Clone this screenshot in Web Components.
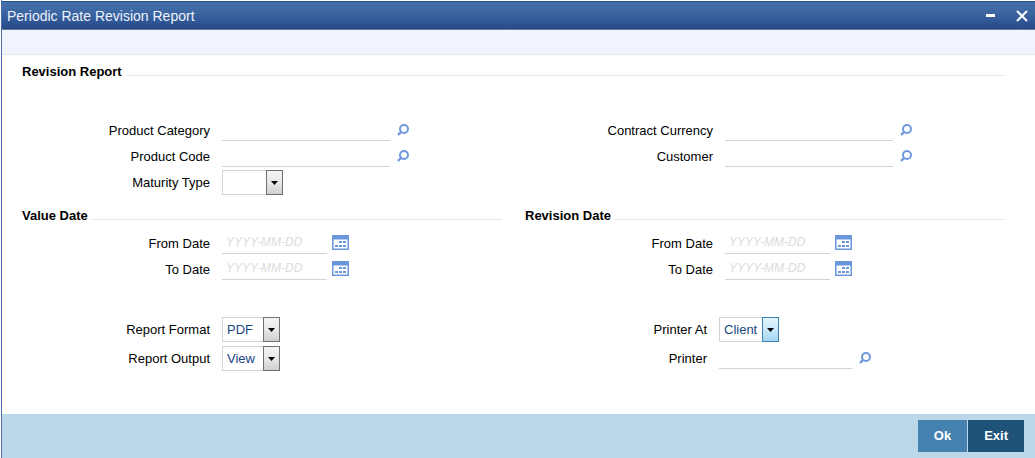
<!DOCTYPE html>
<html lang="en">
<head>
<meta charset="utf-8">
<title>Periodic Rate Revision Report</title>
<style>
  body { margin: 0; background: #fff; color: #000; font: 13px/16px "Liberation Sans", Arial, sans-serif; }
</style>
</head>
<body>
<report-window caption="Periodic Rate Revision Report">
  <form-section caption="Revision Report" class="lead">
    <form-columns>
      <form-rows>
        <lookup-field label="Product Category"></lookup-field>
        <lookup-field label="Product Code"></lookup-field>
        <select-field label="Maturity Type" options=" ,Fixed,Call,Notice" class="blank"></select-field>
      </form-rows>
      <form-rows>
        <lookup-field label="Contract Currency"></lookup-field>
        <lookup-field label="Customer"></lookup-field>
      </form-rows>
    </form-columns>
  </form-section>
  <form-columns>
    <form-section caption="Value Date">
      <form-rows>
        <date-field label="From Date"></date-field>
        <date-field label="To Date"></date-field>
      </form-rows>
    </form-section>
    <form-section caption="Revision Date">
      <form-rows>
        <date-field label="From Date"></date-field>
        <date-field label="To Date"></date-field>
      </form-rows>
    </form-section>
  </form-columns>
  <form-columns class="output">
    <form-rows>
      <select-field label="Report Format" options="PDF,RTF,HTML"></select-field>
      <select-field label="Report Output" options="View,Print,Spool"></select-field>
    </form-rows>
    <form-rows class="printer">
      <select-field label="Printer At" options="Client,Server" class="active"></select-field>
      <lookup-field label="Printer"></lookup-field>
    </form-rows>
  </form-columns>
  <action-button slot="actions">Ok</action-button>
  <action-button slot="actions" primary>Exit</action-button>
</report-window>

<script>
const base = `*, *::before, *::after { box-sizing: border-box; }
  button { border: 0; padding: 0; background: none; font: inherit; color: inherit; cursor: pointer; }`;

const fieldStyle = `${base}
  :host { display: flex; height: 26px; }
  label { flex: none; width: var(--label-width, 188px); margin-right: 12px; line-height: 27px; text-align: right; white-space: nowrap; }
  input { flex: none; height: 24px; border: 0; border-bottom: 1px solid #d3d3d3; border-radius: 0; padding: 0 4px; background: transparent; font: inherit; color: #1a4682; outline: 0; }
  button { display: flex; flex: none; }
  svg { display: block; }`;

class Base extends HTMLElement {
  constructor() { super(); this.attachShadow({ mode: "open" }); }
  connectedCallback() { this.shadowRoot.innerHTML = this.render(); }
  attr(name) { return this.getAttribute(name) || ""; }
}

customElements.define("report-window", class extends Base {
  render() { return `<style>${base}
    :host { display: flex; flex-direction: column; min-height: 100vh; box-sizing: border-box; margin-left: 1px; border-left: 1px solid #4a6fb0; padding-top: 1px; }
    header { display: flex; align-items: center; height: 29px; padding: 0 7px 0 5px; color: #eef3fb; background: linear-gradient(#436fa9, #3c66a2 40%, #26498a); border-top: 1px solid #234f90; border-bottom: 1px solid #6a7c96; }
    h1 { flex: 1; margin: 0; font-size: 14px; font-weight: normal; line-height: 16px; }
    header button { display: flex; }
    header button + button { margin-left: 20px; }
    .toolbar { height: 25px; background: #f0f4ff; border-bottom: 1px solid #e4e7ee; }
    main { flex: 1; padding: 9px 30px 43px 20px; }
    footer { display: flex; justify-content: flex-end; gap: 1px; height: 44px; padding: 6px 11px 6px 0; background: #bcd7ea; }
  </style>
  <header>
    <h1>${this.attr("caption")}</h1>
    <button type="button" aria-label="Minimize"><svg width="10" height="11"><path d="M0 5.5h9" stroke="#fff" stroke-width="3"/></svg></button>
    <button type="button" aria-label="Close"><svg width="12" height="12"><path d="M1 1l10 10M11 1L1 11" stroke="#fff" stroke-width="2"/></svg></button>
  </header>
  <div class="toolbar"></div>
  <main><slot></slot></main>
  <footer><slot name="actions"></slot></footer>`; }
});

customElements.define("form-section", class extends Base {
  render() { return `<style>${base}
    :host { display: block; --section-gap: 6px; }
    :host(.lead) { --section-gap: 37px; margin-bottom: 13px; }
    h2 { display: flex; align-items: flex-end; gap: 4px; margin: 0 0 var(--section-gap); font-size: 13px; line-height: 16px; white-space: nowrap; }
    h2::after { content: ""; flex: 1; height: 1px; margin-bottom: 4px; background: #e8e8e8; }
  </style><h2>${this.attr("caption")}</h2><slot></slot>`; }
});

customElements.define("form-columns", class extends Base {
  render() { return `<style>
    :host { display: grid; grid-template-columns: repeat(2, minmax(0, 1fr)); column-gap: 23px; }
    :host(.output) { margin-top: 34px; --row-gap: 3px; }
  </style><slot></slot>`; }
});

customElements.define("form-rows", class extends Base {
  render() { return `<style>
    :host { display: flex; flex-direction: column; gap: var(--row-gap, 0px); }
    :host(.printer) { --label-width: 182px; --input-width: 133px; }
  </style><slot></slot>`; }
});

customElements.define("lookup-field", class extends Base {
  render() { return `<style>${fieldStyle}
    input { width: var(--input-width, 168px); margin-right: 7px; }
    button { align-self: flex-start; margin-top: 7px; }
  </style>
  <label for="field">${this.attr("label")}</label>
  <input id="field" type="text">
  <button type="button" aria-label="Look up ${this.attr("label")}"><svg width="12" height="12" fill="none" stroke="#7099dc"><circle cx="7" cy="5" r="4" stroke-width="2"/><path d="M4.2 7.8L1 11" stroke-width="2.4"/></svg></button>`; }
});

customElements.define("date-field", class extends Base {
  render() { return `<style>${fieldStyle}
    input { width: 105px; margin-right: 5px; }
    input::placeholder { color: #dcdcdc; opacity: 1; font-size: 12px; font-style: italic; }
    button { align-self: flex-start; margin-top: 5px; }
  </style>
  <label for="field">${this.attr("label")}</label>
  <input id="field" type="text" placeholder="YYYY-MM-DD">
  <button type="button" aria-label="Pick ${this.attr("label")}"><svg width="17" height="15" fill="#6b96dc"><path d="M0 0h17v15H0zM1.5 4.5v9h14v-9z" fill-rule="evenodd"/><path d="M7 6h3v2H7zM11 6h3v2h-3zM3 10h3v2H3zM7 10h3v2H7zM11 10h3v2h-3z"/></svg></button>`; }
});

customElements.define("select-field", class extends Base {
  render() {
    const options = this.attr("options").split(",").map(o => `<option>${o}</option>`).join("");
    return `<style>${fieldStyle}
    :host { --edge: #707070; --face: linear-gradient(#f4f4f4, #e8e8e8 50%, #cfcfcf); }
    :host(.active) { --edge: #3c7fb1; --face: linear-gradient(#e6f5fd, #c9e8f9 50%, #a3d6f2); --select-width: 60px; }
    :host(.blank) { --select-width: 61px; }
    .box { display: grid; width: var(--select-width, 58px); height: 25px; margin-top: 1px; }
    select, .arrow { grid-area: 1 / 1; }
    select { appearance: none; width: 100%; border: 1px solid #d3d3d3; border-radius: 0; padding: 0 18px 0 4px; background: #fff; font: inherit; color: #1a4682; outline: 0; }
    .arrow { justify-self: end; display: grid; place-items: center; width: 17px; border: 1px solid var(--edge); background: var(--face); pointer-events: none; }
    </style>
    <label for="field">${this.attr("label")}</label>
    <div class="box"><select id="field">${options}</select>
    <span class="arrow"><svg width="7" height="4"><path d="M0 0h7L3.5 4z"/></svg></span></div>`;
  }
});

customElements.define("action-button", class extends Base {
  render() { return `<style>${base}
    :host { display: flex; }
    button { min-width: 48px; padding: 0 16px; background: #4682b0; color: #fff; font-weight: bold; }
    :host([primary]) button { background: #1f5279; }
  </style><button type="button"><slot></slot></button>`; }
});
</script>
</body>
</html>
